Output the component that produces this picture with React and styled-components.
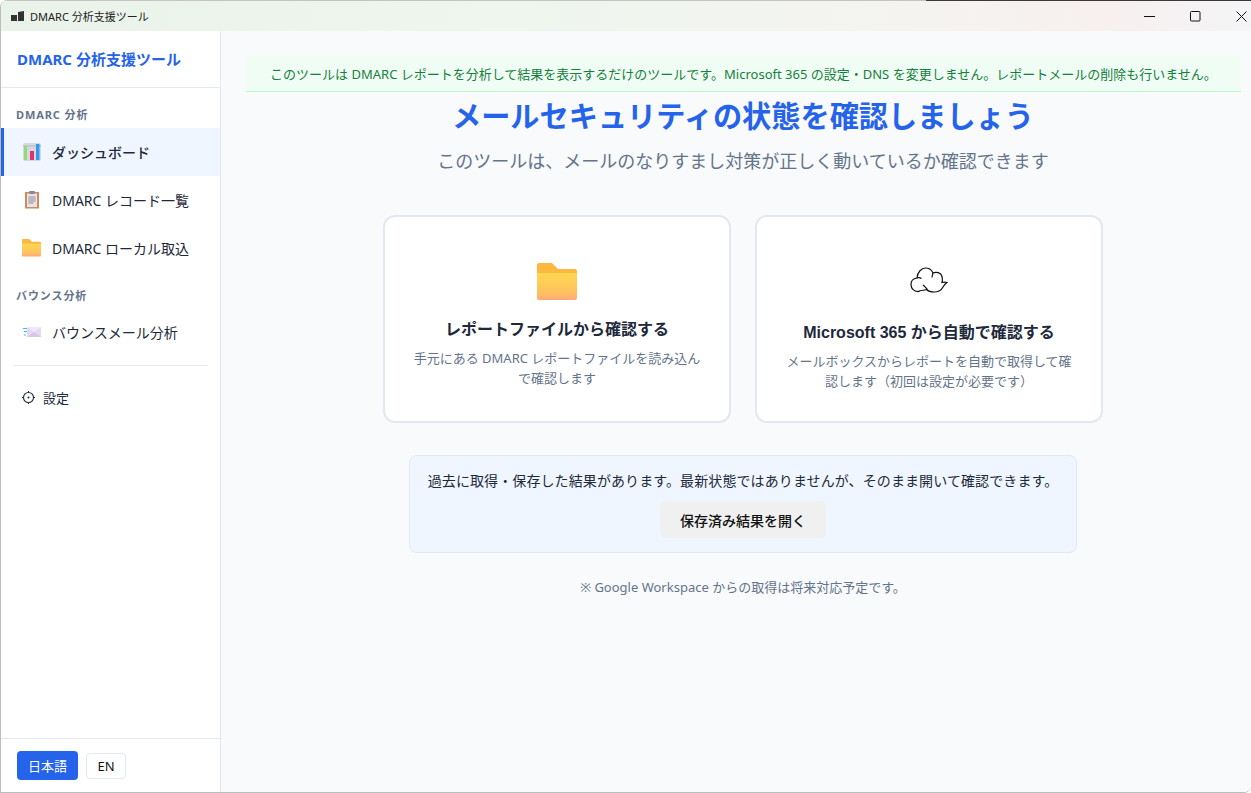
import styled, { createGlobalStyle } from "styled-components";

const FONT = `"Noto Sans", "Noto Sans CJK JP", sans-serif`;

const GlobalStyle = createGlobalStyle`
  html, body {
    margin: 0;
    padding: 0;
    height: 100%;
    background: #fff;
  }
  * { box-sizing: border-box; }
`;

function ChartIcon() {
  return (
    <svg width="18" height="18" viewBox="0 0 18 18">
      <rect x="0" y="0" width="18" height="18" rx="2" fill="#d9d6e2" />
      <rect x="0" y="2.5" width="18" height="1" fill="#b9b3c2" />
      <rect x="1" y="3" width="3" height="14" fill="#8ede6f" />
      <rect x="7" y="8" width="4" height="9" fill="#e0316f" />
      <rect x="13" y="1" width="3.5" height="16" fill="#2d9cea" />
    </svg>
  );
}

function ClipboardIcon() {
  return (
    <svg width="18" height="18" viewBox="0 0 18 18">
      <rect x="2" y="1" width="14" height="16.5" fill="#d08a5c" />
      <rect x="4" y="2.5" width="10" height="13.5" fill="#e6e2ec" />
      <rect x="6" y="0" width="6" height="3" rx="1" fill="#8d8792" />
      <path d="M5.5 6h7M5.5 8h7M5.5 10h7M5.5 12h5" stroke="#8f8a98" strokeWidth="1" />
    </svg>
  );
}

function FolderIcon({ size }) {
  return (
    <svg width={size} height={(size * 37) / 40} viewBox="0 1 40 37">
      <defs>
        <linearGradient id={`folderFront${size}`} x1="0" y1="0" x2="0" y2="1">
          <stop offset="0" stopColor="#ffd84f" />
          <stop offset="0.7" stopColor="#ffc260" />
          <stop offset="1" stopColor="#ffa977" />
        </linearGradient>
      </defs>
      <path d="M0 3a2 2 0 0 1 2-2h13l6 6h17a2 2 0 0 1 2 2v6H0z" fill="#ffb83f" />
      <path d="M0 11h40v25a2 2 0 0 1-2 2H2a2 2 0 0 1-2-2z" fill={`url(#folderFront${size})`} />
    </svg>
  );
}

function MailIcon() {
  return (
    <svg width="18" height="12" viewBox="0 0 18 12">
      <rect x="4" y="1" width="14" height="10" fill="#e4d8f2" />
      <path d="M4 1l7 5 7-5" fill="#efe8f8" />
      <path d="M4 11l7-5 7 5" fill="#d6c6ea" />
      <path d="M0 2.5h4M1 5.5h3M1 9h2" stroke="#35c3f0" strokeWidth="1" />
    </svg>
  );
}

function GearIcon() {
  return (
    <svg width="13" height="13" viewBox="0 0 13 13" fill="none">
      <circle cx="6.5" cy="6.5" r="5" stroke="#1e293b" strokeWidth="1.1" />
      <circle cx="6.5" cy="6.5" r="1" fill="#1e293b" />
      <path d="M6.5 0v1.5M6.5 11.5V13M0 6.5h1.5M11.5 6.5H13" stroke="#1e293b" strokeWidth="1" />
    </svg>
  );
}

function CloudIcon() {
  return (
    <svg width="38" height="28" viewBox="0 0 38 28" fill="none" stroke="#111" strokeWidth="1.2">
      <path d="M9 25.5C4 26 1 22.5 1 18.5c0-3.5 2.500-6 6-6.500C7.500 6 11.500 2 15.500 2c3.500 0 6 1.500 7.500 5 3-1.500 8-.5 9 3.500.5 2 .5 4 0 6 2-.5 3.500-.5 5 0-1.500 1-3 2.500-4 4.500-1.500 3-5 5-9 5-3.500 0-5.500-.5-7.500-2.500-1.500.5-5 1-7.500 1.500z" />
      <path d="M7 12c1.500-.5 3-.5 4.500.5M23 7c-.5 1.500-1 3-1 4.500M13 19c1.500 1 3 3 4.500 4.500" />
    </svg>
  );
}

const MENU_DMARC = [
  { label: "ダッシュボード", icon: <ChartIcon />, active: true },
  { label: "DMARC レコード一覧", icon: <ClipboardIcon /> },
  { label: "DMARC ローカル取込", icon: <FolderIcon size={19} /> },
];

export default function App() {
  return (
    <Win>
      <GlobalStyle />
      <TopEdge />
      <TitleBar>
        <TitleLeft>
          <svg width="13" height="10" viewBox="0 0 13 10" fill="#333">
            <rect x="0" y="4" width="6" height="6" />
            <path d="M7 1l6-1v10H7z" />
          </svg>
          <TitleText>DMARC 分析支援ツール</TitleText>
        </TitleLeft>
        <WinButtons>
          <WinButton>
            <svg width="11" height="11" viewBox="0 0 11 11" stroke="#111" fill="none">
              <path d="M0 5.5h11" />
            </svg>
          </WinButton>
          <WinButton>
            <svg width="11" height="11" viewBox="0 0 11 11" stroke="#111" fill="none">
              <rect x="0.5" y="0.5" width="9.500" height="9.500" rx="1" />
            </svg>
          </WinButton>
          <WinButton>
            <svg width="11" height="11" viewBox="0 0 11 11" stroke="#111" fill="none">
              <path d="M0.500 0.500l10 10M10.500 0.500l-10 10" />
            </svg>
          </WinButton>
        </WinButtons>
      </TitleBar>

      <Body>
        <Sidebar>
          <Brand>DMARC 分析支援ツール</Brand>
          <Nav>
            <SectionLabel>DMARC 分析</SectionLabel>
            {MENU_DMARC.map((item) => (
              <NavItem key={item.label} $active={item.active}>
                <NavIcon>{item.icon}</NavIcon>
                {item.label}
              </NavItem>
            ))}
            <SectionLabel $second>バウンス分析</SectionLabel>
            <NavItem>
              <NavIcon><MailIcon /></NavIcon>
              バウンスメール分析
            </NavItem>
            <Divider />
            <SettingsItem>
              <GearIcon />
              設定
            </SettingsItem>
          </Nav>
          <LangBar>
            <LangButton $active>日本語</LangButton>
            <LangButton>EN</LangButton>
          </LangBar>
        </Sidebar>

        <Main>
          <Banner>
            このツールは DMARC レポートを分析して結果を表示するだけのツールです。Microsoft 365 の設定・DNS を変更しません。レポートメールの削除も行いません。
          </Banner>
          <Heading>メールセキュリティの状態を確認しましょう</Heading>
          <SubHeading>このツールは、メールのなりすまし対策が正しく動いているか確認できます</SubHeading>

          <Cards>
            <Card>
              <CardIcon><FolderIcon size={40} /></CardIcon>
              <CardTitle>レポートファイルから確認する</CardTitle>
              <CardText>手元にある DMARC レポートファイルを読み込んで確認します</CardText>
            </Card>
            <Card $shift>
              <CardIcon><CloudIcon /></CardIcon>
              <CardTitle>Microsoft 365 から自動で確認する</CardTitle>
              <CardText>メールボックスからレポートを自動で取得して確認します（初回は設定が必要です）</CardText>
            </Card>
          </Cards>

          <SavedBox>
            <SavedText>過去に取得・保存した結果があります。最新状態ではありませんが、そのまま開いて確認できます。</SavedText>
            <SavedButton>保存済み結果を開く</SavedButton>
          </SavedBox>

          <Footnote>※ Google Workspace からの取得は将来対応予定です。</Footnote>
        </Main>
      </Body>
    </Win>
  );
}

const Win = styled.div`
  height: 793px;
  width: 1251px;
  overflow: hidden;
  display: flex;
  flex-direction: column;
  font-family: ${FONT};
  border: 1px solid #bdbdbd;
  border-top: none;
  border-right: none;
  border-radius: 7px 0 7px 0;
  background: #fff;
`;

const TopEdge = styled.div`
  height: 1px;
  flex: none;
  background: linear-gradient(90deg, #c4c4c4 74%, #3a3a3a 74%);
`;

const TitleBar = styled.div`
  height: 30px;
  flex: none;
  display: flex;
  justify-content: space-between;
  align-items: center;
  padding-left: 10px;
  background: linear-gradient(90deg, #eaf3ea 0%, #eef6ee 40%, #f5f3f0 75%, #f7f0ef 88%, #f4f4f6 100%);
`;

const TitleLeft = styled.div`
  display: flex;
  align-items: center;
  gap: 6px;
`;

const TitleText = styled.span`
  font-size: 11px;
  color: #222;
`;

const WinButtons = styled.div`
  display: flex;
  margin-right: -13px;
`;

const WinButton = styled.div`
  width: 46px;
  height: 30px;
  display: flex;
  align-items: center;
  justify-content: center;
`;

const Body = styled.div`
  flex: 1;
  min-height: 0;
  display: flex;
`;

const Sidebar = styled.aside`
  width: 220px;
  flex: none;
  display: flex;
  flex-direction: column;
  background: #fff;
  border-right: 1px solid #e2e8f0;
`;

const Brand = styled.div`
  height: 57px;
  flex: none;
  display: flex;
  align-items: center;
  padding-left: 16px;
  padding-bottom: 2px;
  font-size: 15px;
  font-weight: 700;
  color: #2563eb;
  border-bottom: 1px solid #e2e8f0;
`;

const Nav = styled.nav`
  flex: 1;
  display: flex;
  flex-direction: column;
`;

const SectionLabel = styled.div`
  height: ${(p) => (p.$second ? "36px" : "40px")};
  flex: none;
  padding: ${(p) => (p.$second ? "16px" : "19px")} 0 0 15px;
  font-size: 11px;
  line-height: 16px;
  font-weight: 700;
  letter-spacing: 0.9px;
  color: #64748b;
`;

const NavItem = styled.div`
  height: 48px;
  flex: none;
  display: flex;
  align-items: center;
  gap: 11px;
  padding-left: ${(p) => (p.$active ? "18px" : "21px")};
  font-size: 14px;
  font-weight: ${(p) => (p.$active ? 500 : 400)};
  color: #1e293b;
  background: ${(p) => (p.$active ? "#eff6ff" : "transparent")};
  border-left: ${(p) => (p.$active ? "3px solid #2563eb" : "none")};
`;

const NavIcon = styled.span`
  width: 19px;
  display: flex;
  align-items: center;
  justify-content: center;
`;

const Divider = styled.div`
  height: 1px;
  flex: none;
  margin: 9px 12px 0 13px;
  background: #e2e8f0;
`;

const SettingsItem = styled.div`
  height: 48px;
  flex: none;
  margin-top: 7px;
  display: flex;
  align-items: center;
  gap: 8px;
  padding-left: 21px;
  font-size: 13px;
  color: #1e293b;
`;

const LangBar = styled.div`
  height: 54px;
  flex: none;
  display: flex;
  align-items: flex-start;
  gap: 8px;
  padding: 12px 0 0 16px;
  border-top: 1px solid #e2e8f0;
`;

const LangButton = styled.div`
  height: ${(p) => (p.$active ? "29px" : "26px")};
  margin-top: ${(p) => (p.$active ? "0" : "2px")};
  padding: 0 ${(p) => (p.$active ? "11px" : "10.5px")};
  display: flex;
  align-items: center;
  font-size: 13px;
  border-radius: 4px;
  color: ${(p) => (p.$active ? "#fff" : "#111")};
  background: ${(p) => (p.$active ? "#2563eb" : "#fff")};
  border: ${(p) => (p.$active ? "none" : "1px solid #e2e8f0")};
`;

const Main = styled.main`
  flex: 1;
  min-width: 0;
  display: flex;
  flex-direction: column;
  align-items: center;
  padding: 25px 11px 0 25px;
  background: #f8fafc;
`;

const Banner = styled.div`
  align-self: stretch;
  height: 36px;
  flex: none;
  margin-right: -1px;
  display: flex;
  align-items: center;
  justify-content: center;
  font-size: 13px;
  white-space: nowrap;
  color: #15803d;
  background: #f0fdf4;
  border-bottom: 1px solid #bbf7d0;
`;

const Heading = styled.h1`
  margin: 4px 0 0;
  font-size: 29.2px;
  line-height: 40px;
  font-weight: 700;
  color: #2563eb;
`;

const SubHeading = styled.p`
  margin: 13px 0 0;
  font-size: 18px;
  line-height: 24px;
  color: #64748b;
`;

const Cards = styled.div`
  display: flex;
  gap: 24px;
  margin-top: 42px;
`;

const Card = styled.div`
  width: 348px;
  height: 208px;
  display: flex;
  flex-direction: column;
  align-items: center;
  padding: ${(p) => (p.$shift ? "49px" : "46px")} 24px 0;
  background: #fff;
  border: 2px solid #e2e8f0;
  border-radius: 12px;
`;

const CardIcon = styled.div`
  height: 40px;
  display: flex;
  align-items: flex-start;
  justify-content: center;
`;

const CardTitle = styled.div`
  margin-top: 16px;
  font-family: "Liberation Sans", "Noto Sans CJK JP", sans-serif;
  font-size: 16px;
  line-height: 22px;
  font-weight: 700;
  white-space: nowrap;
  color: #1e293b;
`;

const CardText = styled.div`
  margin-top: 7px;
  font-size: 13px;
  line-height: 20px;
  text-align: center;
  color: #64748b;
`;

const SavedBox = styled.div`
  width: 668px;
  height: 98px;
  margin-top: 32px;
  display: flex;
  flex-direction: column;
  align-items: center;
  padding-top: 15px;
  background: #eff6ff;
  border: 1px solid #e2e8f0;
  border-radius: 8px;
`;

const SavedText = styled.div`
  font-size: 14px;
  line-height: 20px;
  letter-spacing: 0.1px;
  white-space: nowrap;
  color: #1e293b;
`;

const SavedButton = styled.div`
  margin-top: 10px;
  width: 166px;
  height: 37px;
  display: flex;
  align-items: center;
  justify-content: center;
  font-size: 14px;
  font-weight: 500;
  color: #111;
  background: #f0f0f0;
  border-radius: 6px;
`;

const Footnote = styled.div`
  margin-top: 25px;
  font-size: 13px;
  line-height: 18px;
  color: #64748b;
`;
